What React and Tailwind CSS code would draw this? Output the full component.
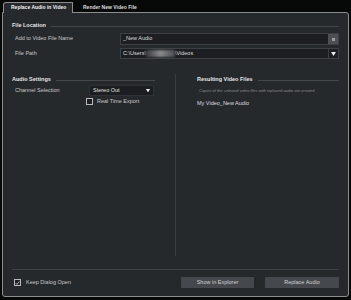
import React from "react";

function Heading({ children }) {
  return (
    <div className="flex items-center h-[8px] gap-[5px]">
      <span className="font-bold text-[#e4e6e8] whitespace-nowrap">{children}</span>
      <div className="flex-1 h-px bg-[#44474b]" />
    </div>
  );
}

function Check({ checked }) {
  return (
    <div className="w-[7px] h-[7px] border border-[#b8babc] bg-[#1d1f22] flex items-center justify-center">
      {checked && (
        <svg viewBox="0 0 8 8" className="w-[6px] h-[6px]">
          <path d="M1 4.2 L3.1 6.3 L7 1.5" fill="none" stroke="#e8e8e8" strokeWidth="1.2" />
        </svg>
      )}
    </div>
  );
}

export default function App() {
  return (
    <div className="w-[351px] h-[300px] bg-[#070808] pt-[2px] px-[2px] pb-[3px] flex flex-col font-['Liberation_Sans',Arial,sans-serif] text-[5.5px] text-[#c6c8ca] leading-none">
      {/* tabs */}
      <div className="flex items-start h-[10px] pl-px">
        <div className="relative z-10 w-[70px] h-[11px] bg-[#26292c] border border-b-0 border-[#8e8e8e] rounded-tl-[3px] flex items-center pl-[7px] pb-px font-bold text-[5px] text-[#f0f0f0] whitespace-nowrap">
          Replace Audio in Video
        </div>
        <div className="w-[72px] h-[10px] flex items-center pl-[10px] font-bold text-[5px] text-[#dcdcdc] whitespace-nowrap">
          Render New Video File
        </div>
      </div>

      {/* panel */}
      <div className="flex-1 bg-[#26292c] border border-[#8e8e8e] rounded-[3px] rounded-tl-none flex flex-col pt-[9px] px-[9px] pb-[8px]">
        <Heading>File Location</Heading>

        <div className="flex items-center mt-[3px] h-[12px]">
          <div className="w-[108px] pl-[3px]">Add to Video File Name</div>
          <div className="flex-1 h-[12px] bg-[#1c1e21] border border-[#3d4043] flex items-center">
            <span className="pl-[2px] flex-1 text-[#dadcde]">_New Audio</span>
            <div className="w-[10px] h-[10px] bg-[#4c4f53] flex items-center justify-center">
              <div className="w-[3px] h-[3px] bg-[#9a9c9e]" />
            </div>
          </div>
        </div>

        <div className="flex items-center mt-[3px] h-[11px]">
          <div className="w-[108px] pl-[3px]">File Path</div>
          <div className="flex-1 h-[11px] bg-[#1c1e21] border border-[#3d4043] flex items-center">
            <span className="pl-[2px] text-[#dadcde]">C:\Users\</span>
            <div className="w-[29px] h-[7px] bg-gradient-to-r from-[#3a3c3f] via-[#8a8c8e] to-[#4a4c4f] blur-[1px]" />
            <span className="flex-1 text-[#dadcde]">\Videos</span>
            <div className="w-[10px] h-[9px] border-l border-[#3d4043] flex items-center justify-center">
              <svg viewBox="0 0 6 5" className="w-[5px] h-[4px]">
                <path d="M0 0 H6 L3 5 Z" fill="#f0f0f0" />
              </svg>
            </div>
          </div>
        </div>

        {/* two columns */}
        <div className="flex mt-[15px] h-[182px]">
          <div className="w-[163px] pt-[2px] pr-[20px] flex flex-col">
            <Heading>Audio Settings</Heading>
            <div className="flex items-center mt-[1px] h-[11px]">
              <div className="w-[77px] pl-[3px]">Channel Selection</div>
              <div className="w-[65px] h-[11px] bg-[#1c1e21] border border-[#2f3235] flex items-center pl-[3px] text-[#e0e0e0]">
                <span className="flex-1">Stereo Out</span>
                <svg viewBox="0 0 6 5" className="w-[4px] h-[3.5px] mr-[3px]">
                  <path d="M0 0 H6 L3 5 Z" fill="#f0f0f0" />
                </svg>
              </div>
            </div>
            <div className="flex items-center mt-[2px] h-[7px] pl-[74px] gap-[4px]">
              <Check />
              <span>Real Time Export</span>
            </div>
          </div>
          <div className="w-px bg-[#3a3d41]" />
          <div className="flex-1 pt-[2px] pl-[21px] flex flex-col">
            <Heading>Resulting Video Files</Heading>
            <div className="mt-[4px] h-[6px] flex items-center pl-[2px] italic text-[4px] text-[#8c8f92] whitespace-nowrap">
              Copies of the selected video files with replaced audio are created
            </div>
            <div className="mt-[6px] h-[8px] flex items-center text-[#dcdee0]">My Video_New Audio</div>
          </div>
        </div>

        <div className="mt-auto h-px bg-[#3e4145]" />

        <div className="flex items-center mt-[7px] h-[11px]">
          <div className="flex items-center gap-[5px] pl-[2px] flex-1">
            <Check checked />
            <span>Keep Dialog Open</span>
          </div>
          <div className="w-[73px] h-[11px] bg-[#45484c] rounded-[1px] flex items-center justify-center text-[#d2d4d6]">
            Show in Explorer
          </div>
          <div className="w-[74px] h-[11px] ml-[11px] bg-[#45484c] rounded-[1px] flex items-center justify-center text-[#d2d4d6]">
            Replace Audio
          </div>
        </div>
      </div>
    </div>
  );
}
